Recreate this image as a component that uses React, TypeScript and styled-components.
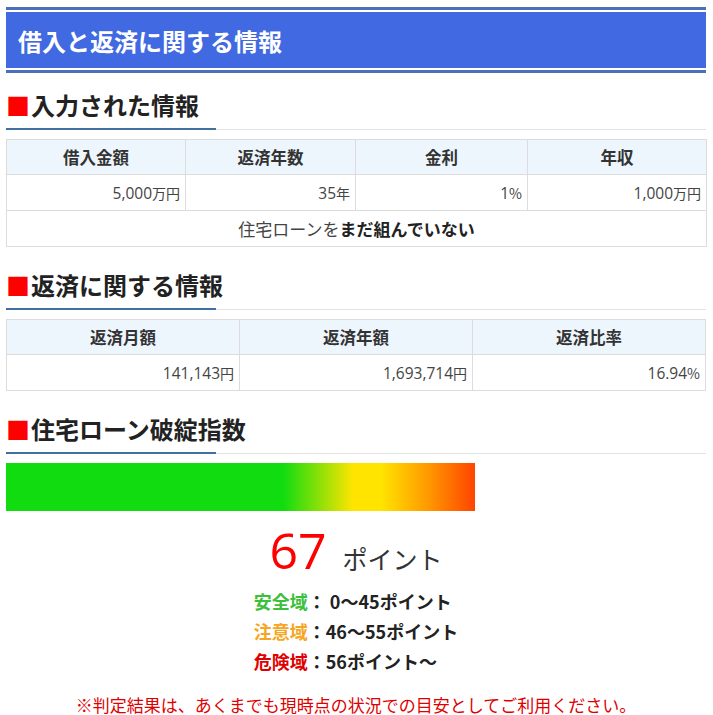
import React from 'react';
import styled, { createGlobalStyle } from 'styled-components';

const GlobalStyle = createGlobalStyle`
  * {
    box-sizing: border-box;
  }
  body {
    margin: 0;
    background: #fff;
    color: #333;
    font-family: 'Open Sans', 'Noto Sans CJK JP', sans-serif;
  }
`;

const Wrapper = styled.div`
  width: 700px;
  margin: 7px 0 0 6px;
`;

const TitleFrame = styled.div`
  border-top: 3px solid #4b6fb8;
  border-bottom: 3px solid #4b6fb8;
  padding: 2px 0;
`;

const Title = styled.h1`
  margin: 0;
  height: 56px;
  display: flex;
  align-items: center;
  padding-left: 12px;
  background-color: #4169e1;
  color: #fff;
  font-family: 'Noto Sans CJK JP', sans-serif;
  font-size: 24px;
  font-weight: 700;
`;

const SectionTitle = styled.h2`
  position: relative;
  margin: 20px 0 9px;
  height: 43px;
  padding-bottom: 7px;
  display: flex;
  align-items: center;
  border-bottom: 1px solid #e3e3e3;
  color: #222;
  font-family: 'Noto Sans CJK JP', sans-serif;
  font-size: 24px;
  font-weight: 700;
  ${TitleFrame} + & {
    margin-top: 14px;
  }
  &::after {
    content: '';
    position: absolute;
    left: 0;
    bottom: -1px;
    width: 210px;
    height: 2px;
    background-color: #41709e;
  }
  span {
    color: #f00;
    margin-right: 1px;
  }
`;

const Table = styled.table`
  width: 100%;
  border-collapse: collapse;
  table-layout: fixed;
  th,
  td {
    border: 1px solid #dcdcdc;
    height: 36px;
    padding: 0 5px;
  }
  th {
    height: 35px;
    background-color: #eef6fd;
    font-family: 'Noto Sans CJK JP', sans-serif;
    font-size: 16.5px;
    font-weight: 700;
    color: #333;
    text-align: center;
  }
  td {
    font-size: 15.5px;
    color: #444;
    text-align: right;
  }
  small {
    font-family: 'Noto Sans CJK JP', sans-serif;
    font-size: 14px;
  }
`;

const NoteCell = styled.td`
  && {
    text-align: center;
    font-family: 'Noto Sans CJK JP', sans-serif;
    font-size: 17px;
  }
  b {
    font-weight: 700;
    color: #222;
  }
`;

const Bar = styled.div`
  height: 48px;
  background: linear-gradient(
    to right,
    #10dc10 0%,
    #10dc10 59%,
    #ffe400 74%,
    #ffe400 80%,
    #ff9900 90%,
    #ff4400 100%
  );
`;

const Score = styled.div`
  display: flex;
  justify-content: center;
  align-items: baseline;
  gap: 16px;
  margin-top: 8px;
  height: 62px;
`;

const ScoreNum = styled.span`
  color: #f00;
  font-size: 50px;
  line-height: 62px;
`;

const ScoreUnit = styled.span`
  font-family: 'Noto Sans CJK JP', sans-serif;
  font-size: 25px;
  color: #333;
`;

const Legend = styled.div`
  display: flex;
  justify-content: center;
  margin-top: 5px;
`;

const LegendList = styled.ul`
  margin: 0;
  padding: 0;
  list-style: none;
`;

const LegendItem = styled.li<{ $color: string }>`
  height: 30px;
  line-height: 30px;
  font-family: 'Noto Sans CJK JP', sans-serif;
  font-size: 18px;
  font-weight: 700;
  color: #222;
  span {
    color: ${(p) => p.$color};
  }
`;

const Notice = styled.p`
  margin: 19px 0 0;
  text-align: center;
  font-family: 'Noto Sans CJK JP', sans-serif;
  font-size: 17px;
  line-height: 20px;
  color: #e00000;
`;

const inputHead = ['借入金額', '返済年数', '金利', '年収'];
const repayHead = ['返済月額', '返済年額', '返済比率'];

const legends = [
  { label: '安全域', text: '： 0〜45ポイント', color: '#3cc03c' },
  { label: '注意域', text: '：46〜55ポイント', color: '#f5a623' },
  { label: '危険域', text: '：56ポイント〜', color: '#e00000' },
];

const score = 67;

const App = () => {
  return (
    <>
      <GlobalStyle />
      <Wrapper>
        <TitleFrame>
          <Title>借入と返済に関する情報</Title>
        </TitleFrame>

        <SectionTitle>
          <span>■</span>入力された情報
        </SectionTitle>
        <Table>
          <colgroup>
            <col style={{ width: 179 }} />
            <col style={{ width: 170 }} />
            <col style={{ width: 172 }} />
            <col style={{ width: 179 }} />
          </colgroup>
          <thead>
            <tr>
              {inputHead.map((h) => (
                <th key={h}>{h}</th>
              ))}
            </tr>
          </thead>
          <tbody>
            <tr>
              <td>
                5,000<small>万円</small>
              </td>
              <td>
                35<small>年</small>
              </td>
              <td>
                1<small>%</small>
              </td>
              <td>
                1,000<small>万円</small>
              </td>
            </tr>
            <tr>
              <NoteCell colSpan={4}>
                住宅ローンを<b>まだ組んでいない</b>
              </NoteCell>
            </tr>
          </tbody>
        </Table>

        <SectionTitle>
          <span>■</span>返済に関する情報
        </SectionTitle>
        <Table>
          <thead>
            <tr>
              {repayHead.map((h) => (
                <th key={h}>{h}</th>
              ))}
            </tr>
          </thead>
          <tbody>
            <tr>
              <td>
                141,143<small>円</small>
              </td>
              <td>
                1,693,714<small>円</small>
              </td>
              <td>
                16.94<small>%</small>
              </td>
            </tr>
          </tbody>
        </Table>

        <SectionTitle>
          <span>■</span>住宅ローン破綻指数
        </SectionTitle>
        <Bar style={{ width: `${score}%` }} />
        <Score>
          <ScoreNum>{score}</ScoreNum>
          <ScoreUnit>ポイント</ScoreUnit>
        </Score>
        <Legend>
          <LegendList>
            {legends.map((l) => (
              <LegendItem key={l.label} $color={l.color}>
                <span>{l.label}</span>
                {l.text}
              </LegendItem>
            ))}
          </LegendList>
        </Legend>
        <Notice>※判定結果は、あくまでも現時点の状況での目安としてご利用ください。</Notice>
      </Wrapper>
    </>
  );
};

export default App;
